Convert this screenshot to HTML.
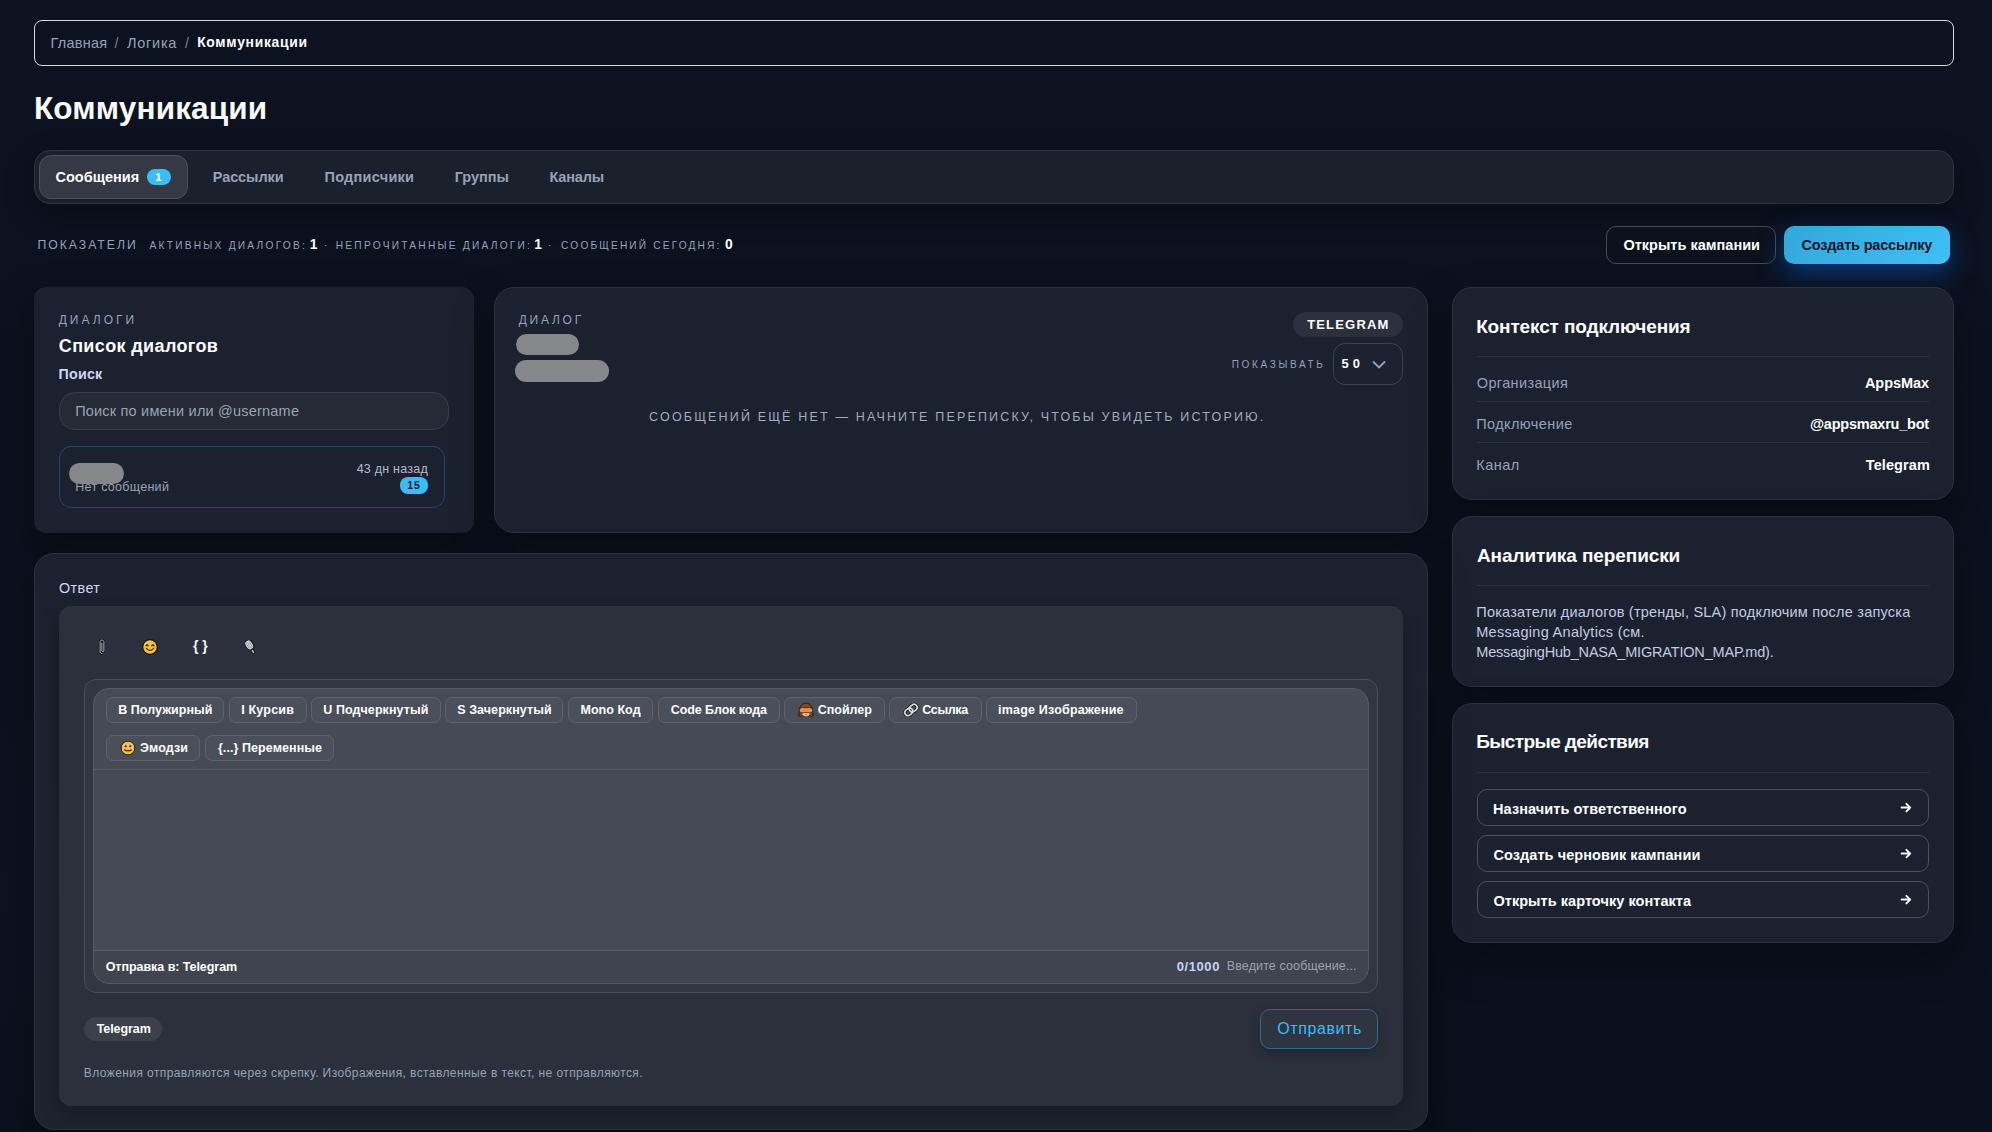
<!DOCTYPE html>
<html><head><meta charset="utf-8"><style>
html,body{margin:0;padding:0;}
body{width:1992px;height:1132px;overflow:hidden;position:relative;background:#0b111e;font-family:"Liberation Sans", sans-serif;}
.bg{position:absolute;inset:0;background:
 radial-gradient(ellipse 600px 400px at 200px 900px, rgba(30,40,70,0.15), transparent 70%),
 linear-gradient(180deg,#0c1220,#0a101d);}
</style></head><body><div class="bg"></div>
<div style="position:absolute;left:34px;top:20px;width:1920px;height:46px;box-sizing:border-box;border:1.5px solid #d6d9de;border-radius:8px;"></div>
<div style="position:absolute;left:50.44px;top:35.73px;font-size:14.5px;line-height:14.5px;font-weight:400;color:#94a3b8;letter-spacing:0.238px;white-space:nowrap;font-family:"Liberation Sans", sans-serif;">Главная</div>
<div style="position:absolute;left:114.60px;top:36.15px;font-size:14px;line-height:14px;font-weight:400;color:#7d8797;letter-spacing:0.000px;white-space:nowrap;font-family:"Liberation Sans", sans-serif;">/</div>
<div style="position:absolute;left:127.06px;top:35.73px;font-size:14.5px;line-height:14.5px;font-weight:400;color:#94a3b8;letter-spacing:0.734px;white-space:nowrap;font-family:"Liberation Sans", sans-serif;">Логика</div>
<div style="position:absolute;left:185.10px;top:36.15px;font-size:14px;line-height:14px;font-weight:400;color:#7d8797;letter-spacing:0.000px;white-space:nowrap;font-family:"Liberation Sans", sans-serif;">/</div>
<div style="position:absolute;left:197.20px;top:36.03px;font-size:13.9px;line-height:13.9px;font-weight:700;color:#ffffff;letter-spacing:0.701px;white-space:nowrap;font-family:"Liberation Sans", sans-serif;">Коммуникации</div>
<div style="position:absolute;left:33.95px;top:92.54px;font-size:31.5px;line-height:31.5px;font-weight:700;color:#f8fafc;letter-spacing:0.157px;white-space:nowrap;font-family:"Liberation Sans", sans-serif;">Коммуникации</div>
<div style="position:absolute;left:34px;top:150px;width:1920px;height:54px;box-sizing:border-box;background:#1b202d;border:1px solid #2d3341;border-radius:16px;box-shadow:0 10px 30px rgba(0,0,0,0.3);"></div>
<div style="position:absolute;left:39px;top:155px;width:149px;height:44px;box-sizing:border-box;background:#343945;border:1px solid #4a505b;border-radius:12px;"></div>
<div style="position:absolute;left:55.52px;top:169.83px;font-size:14.5px;line-height:14.5px;font-weight:700;color:#ffffff;letter-spacing:0.013px;white-space:nowrap;font-family:"Liberation Sans", sans-serif;">Сообщения</div>
<div style="position:absolute;left:147px;top:169px;width:24px;height:16px;background:#38bdf8;border-radius:8px;"></div>
<div style="position:absolute;left:155.34px;top:171.69px;font-size:11px;line-height:11px;font-weight:700;color:#ffffff;letter-spacing:0.000px;white-space:nowrap;font-family:"Liberation Sans", sans-serif;">1</div>
<div style="position:absolute;left:212.76px;top:169.83px;font-size:14.5px;line-height:14.5px;font-weight:700;color:#94a3b8;letter-spacing:-0.079px;white-space:nowrap;font-family:"Liberation Sans", sans-serif;">Рассылки</div>
<div style="position:absolute;left:324.46px;top:169.83px;font-size:14.5px;line-height:14.5px;font-weight:700;color:#94a3b8;letter-spacing:0.268px;white-space:nowrap;font-family:"Liberation Sans", sans-serif;">Подписчики</div>
<div style="position:absolute;left:454.76px;top:169.83px;font-size:14.5px;line-height:14.5px;font-weight:700;color:#94a3b8;letter-spacing:-0.049px;white-space:nowrap;font-family:"Liberation Sans", sans-serif;">Группы</div>
<div style="position:absolute;left:549.46px;top:169.83px;font-size:14.5px;line-height:14.5px;font-weight:700;color:#94a3b8;letter-spacing:-0.175px;white-space:nowrap;font-family:"Liberation Sans", sans-serif;">Каналы</div>
<div style="position:absolute;left:37.42px;top:238.97px;font-size:12.2px;line-height:12.2px;font-weight:400;color:#94a3b8;letter-spacing:2.015px;white-space:nowrap;font-family:"Liberation Sans", sans-serif;">ПОКАЗАТЕЛИ</div>
<div style="position:absolute;left:149.50px;top:241.37px;font-size:10.2px;line-height:10.2px;font-weight:400;color:#94a3b8;letter-spacing:2.233px;white-space:nowrap;font-family:"Liberation Sans", sans-serif;">АКТИВНЫХ ДИАЛОГОВ:</div>
<div style="position:absolute;left:309.87px;top:238.32px;font-size:13.8px;line-height:13.8px;font-weight:700;color:#ffffff;letter-spacing:0.000px;white-space:nowrap;font-family:"Liberation Sans", sans-serif;">1</div>
<div style="position:absolute;left:323.68px;top:239.99px;font-size:11px;line-height:11px;font-weight:400;color:#94a3b8;letter-spacing:0.000px;white-space:nowrap;font-family:"Liberation Sans", sans-serif;">·</div>
<div style="position:absolute;left:335.78px;top:241.37px;font-size:10.2px;line-height:10.2px;font-weight:400;color:#94a3b8;letter-spacing:2.226px;white-space:nowrap;font-family:"Liberation Sans", sans-serif;">НЕПРОЧИТАННЫЕ ДИАЛОГИ:</div>
<div style="position:absolute;left:534.17px;top:238.32px;font-size:13.8px;line-height:13.8px;font-weight:700;color:#ffffff;letter-spacing:0.000px;white-space:nowrap;font-family:"Liberation Sans", sans-serif;">1</div>
<div style="position:absolute;left:547.68px;top:239.99px;font-size:11px;line-height:11px;font-weight:400;color:#94a3b8;letter-spacing:0.000px;white-space:nowrap;font-family:"Liberation Sans", sans-serif;">·</div>
<div style="position:absolute;left:561.09px;top:241.37px;font-size:10.2px;line-height:10.2px;font-weight:400;color:#94a3b8;letter-spacing:2.131px;white-space:nowrap;font-family:"Liberation Sans", sans-serif;">СООБЩЕНИЙ СЕГОДНЯ:</div>
<div style="position:absolute;left:724.95px;top:238.32px;font-size:13.8px;line-height:13.8px;font-weight:700;color:#ffffff;letter-spacing:0.000px;white-space:nowrap;font-family:"Liberation Sans", sans-serif;">0</div>
<div style="position:absolute;left:1606px;top:226px;width:170px;height:38px;box-sizing:border-box;border:1px solid #444b57;border-radius:10px;background:#0c111d;"></div>
<div style="position:absolute;left:1623.42px;top:238.03px;font-size:14.5px;line-height:14.5px;font-weight:700;color:#ffffff;letter-spacing:0.015px;white-space:nowrap;font-family:"Liberation Sans", sans-serif;">Открыть кампании</div>
<div style="position:absolute;left:1784px;top:226px;width:166px;height:38px;border-radius:10px;background:linear-gradient(135deg,#34a6da,#3ec0f6);box-shadow:0 10px 26px rgba(8,95,215,0.5);"></div>
<div style="position:absolute;left:1801.42px;top:238.03px;font-size:14.5px;line-height:14.5px;font-weight:700;color:#0f172a;letter-spacing:-0.178px;white-space:nowrap;font-family:"Liberation Sans", sans-serif;">Создать рассылку</div>
<div style="position:absolute;left:34px;top:287px;width:440px;height:246px;background:#1c2130;border-radius:12px;box-shadow:0 18px 40px rgba(0,0,0,0.35);"></div>
<div style="position:absolute;left:58.74px;top:313.64px;font-size:12px;line-height:12px;font-weight:400;color:#94a3b8;letter-spacing:3.003px;white-space:nowrap;font-family:"Liberation Sans", sans-serif;">ДИАЛОГИ</div>
<div style="position:absolute;left:58.78px;top:336.76px;font-size:18px;line-height:18px;font-weight:700;color:#ffffff;letter-spacing:0.368px;white-space:nowrap;font-family:"Liberation Sans", sans-serif;">Список диалогов</div>
<div style="position:absolute;left:58.57px;top:367.00px;font-size:14.3px;line-height:14.3px;font-weight:700;color:#cdd5f2;letter-spacing:0.182px;white-space:nowrap;font-family:"Liberation Sans", sans-serif;">Поиск</div>
<div style="position:absolute;left:59px;top:392px;width:390px;height:38px;box-sizing:border-box;background:#252a36;border:1px solid #383e4a;border-radius:16px;"></div>
<div style="position:absolute;left:75.14px;top:404.03px;font-size:14.5px;line-height:14.5px;font-weight:400;color:#9aa3b2;letter-spacing:0.204px;white-space:nowrap;font-family:"Liberation Sans", sans-serif;">Поиск по имени или @username</div>
<div style="position:absolute;left:59px;top:446px;width:386px;height:61.5px;box-sizing:border-box;border:1px solid #1f4a66;border-radius:12px;background:#1c2130;"></div>
<div style="position:absolute;left:75.30px;top:481.42px;font-size:12.5px;line-height:12.5px;font-weight:400;color:#9aa3b2;letter-spacing:0.282px;white-space:nowrap;font-family:"Liberation Sans", sans-serif;">Нет сообщений</div>
<div style="position:absolute;left:69px;top:462.6px;width:55px;height:21px;background:#86878b;border-radius:11px;"></div>
<div style="position:absolute;left:356.65px;top:463.42px;font-size:12.5px;line-height:12.5px;font-weight:400;color:#b3bcc9;letter-spacing:0.235px;white-space:nowrap;font-family:"Liberation Sans", sans-serif;">43 дн назад</div>
<div style="position:absolute;left:400px;top:477.4px;width:28px;height:16.4px;background:#38bdf8;border-radius:8px;"></div>
<div style="position:absolute;left:407.37px;top:480.11px;font-size:10.5px;line-height:10.5px;font-weight:700;color:#0f172a;letter-spacing:0.738px;white-space:nowrap;font-family:"Liberation Sans", sans-serif;">15</div>
<div style="position:absolute;left:494px;top:287px;width:934px;height:246px;box-sizing:border-box;background:#1c2130;border:1px solid #2c3240;border-radius:20px;box-shadow:0 18px 40px rgba(0,0,0,0.35);"></div>
<div style="position:absolute;left:518.74px;top:313.94px;font-size:12px;line-height:12px;font-weight:400;color:#94a3b8;letter-spacing:2.744px;white-space:nowrap;font-family:"Liberation Sans", sans-serif;">ДИАЛОГ</div>
<div style="position:absolute;left:515.5px;top:334px;width:63px;height:21px;background:#86878b;border-radius:11px;"></div>
<div style="position:absolute;left:515px;top:360.2px;width:94px;height:21.5px;background:#86878b;border-radius:11px;"></div>
<div style="position:absolute;left:1293px;top:312px;width:110px;height:25px;background:#2b303c;border-radius:13px;"></div>
<div style="position:absolute;left:1307.17px;top:318.00px;font-size:13px;line-height:13px;font-weight:700;color:#ffffff;letter-spacing:1.178px;white-space:nowrap;font-family:"Liberation Sans", sans-serif;">TELEGRAM</div>
<div style="position:absolute;left:1231.70px;top:359.84px;font-size:10px;line-height:10px;font-weight:400;color:#94a3b8;letter-spacing:2.672px;white-space:nowrap;font-family:"Liberation Sans", sans-serif;">ПОКАЗЫВАТЬ</div>
<div style="position:absolute;left:1333px;top:343px;width:70px;height:42px;box-sizing:border-box;border:1px solid #3c4250;border-radius:12px;"></div>
<div style="position:absolute;left:1341.61px;top:357.00px;font-size:13px;line-height:13px;font-weight:700;color:#ffffff;letter-spacing:3.980px;white-space:nowrap;font-family:"Liberation Sans", sans-serif;">50</div>
<svg style="position:absolute;left:1371px;top:359px" width="16" height="12" viewBox="0 0 16 12"><path d="M2.5 3 L8 8.5 L13.5 3" fill="none" stroke="#94a3b8" stroke-width="1.8" stroke-linecap="round"/></svg>
<div style="position:absolute;left:649.08px;top:410.62px;font-size:12.5px;line-height:12.5px;font-weight:400;color:#a3acba;letter-spacing:2.169px;white-space:nowrap;font-family:"Liberation Sans", sans-serif;">СООБЩЕНИЙ ЕЩЁ НЕТ — НАЧНИТЕ ПЕРЕПИСКУ, ЧТОБЫ УВИДЕТЬ ИСТОРИЮ.</div>
<div style="position:absolute;left:1452px;top:287px;width:502px;height:213px;box-sizing:border-box;background:#1c2130;border:1px solid #2c3240;border-radius:20px;box-shadow:0 18px 40px rgba(0,0,0,0.35);"></div>
<div style="position:absolute;left:1476.17px;top:316.52px;font-size:19px;line-height:19px;font-weight:700;color:#ffffff;letter-spacing:-0.132px;white-space:nowrap;font-family:"Liberation Sans", sans-serif;">Контекст подключения</div>
<div style="position:absolute;left:1477px;top:356px;width:452px;height:1px;background:#2a303c;"></div>
<div style="position:absolute;left:1476.75px;top:376.33px;font-size:14.5px;line-height:14.5px;font-weight:400;color:#94a3b8;letter-spacing:0.366px;white-space:nowrap;font-family:"Liberation Sans", sans-serif;">Организация</div>
<div style="position:absolute;left:1864.94px;top:376.33px;font-size:14.5px;line-height:14.5px;font-weight:700;color:#ffffff;letter-spacing:-0.053px;white-space:nowrap;font-family:"Liberation Sans", sans-serif;">AppsMax</div>
<div style="position:absolute;left:1477px;top:401px;width:452px;height:1px;background:#2a303c;"></div>
<div style="position:absolute;left:1476.24px;top:417.03px;font-size:14.5px;line-height:14.5px;font-weight:400;color:#94a3b8;letter-spacing:0.408px;white-space:nowrap;font-family:"Liberation Sans", sans-serif;">Подключение</div>
<div style="position:absolute;left:1809.90px;top:417.03px;font-size:14.5px;line-height:14.5px;font-weight:700;color:#ffffff;letter-spacing:-0.219px;white-space:nowrap;font-family:"Liberation Sans", sans-serif;">@appsmaxru_bot</div>
<div style="position:absolute;left:1477px;top:442px;width:452px;height:1px;background:#2a303c;"></div>
<div style="position:absolute;left:1476.24px;top:457.73px;font-size:14.5px;line-height:14.5px;font-weight:400;color:#94a3b8;letter-spacing:0.460px;white-space:nowrap;font-family:"Liberation Sans", sans-serif;">Канал</div>
<div style="position:absolute;left:1865.76px;top:457.73px;font-size:14.5px;line-height:14.5px;font-weight:700;color:#ffffff;letter-spacing:0.097px;white-space:nowrap;font-family:"Liberation Sans", sans-serif;">Telegram</div>
<div style="position:absolute;left:1452px;top:516px;width:502px;height:171px;box-sizing:border-box;background:#1c2130;border:1px solid #2c3240;border-radius:20px;box-shadow:0 18px 40px rgba(0,0,0,0.35);"></div>
<div style="position:absolute;left:1476.93px;top:545.72px;font-size:19px;line-height:19px;font-weight:700;color:#ffffff;letter-spacing:-0.089px;white-space:nowrap;font-family:"Liberation Sans", sans-serif;">Аналитика переписки</div>
<div style="position:absolute;left:1477px;top:585px;width:452px;height:1px;background:#2a303c;"></div>
<div style="position:absolute;left:1476.24px;top:604.73px;font-size:14.5px;line-height:14.5px;font-weight:400;color:#c3cbe0;letter-spacing:0.223px;white-space:nowrap;font-family:"Liberation Sans", sans-serif;">Показатели диалогов (тренды, SLA) подключим после запуска</div>
<div style="position:absolute;left:1476.24px;top:624.73px;font-size:14.5px;line-height:14.5px;font-weight:400;color:#c3cbe0;letter-spacing:0.300px;white-space:nowrap;font-family:"Liberation Sans", sans-serif;">Messaging Analytics (см.</div>
<div style="position:absolute;left:1476.24px;top:644.73px;font-size:14.5px;line-height:14.5px;font-weight:400;color:#c3cbe0;letter-spacing:-0.186px;white-space:nowrap;font-family:"Liberation Sans", sans-serif;">MessagingHub_NASA_MIGRATION_MAP.md).</div>
<div style="position:absolute;left:1452px;top:703px;width:502px;height:240px;box-sizing:border-box;background:#1c2130;border:1px solid #2c3240;border-radius:20px;box-shadow:0 18px 40px rgba(0,0,0,0.35);"></div>
<div style="position:absolute;left:1476.17px;top:731.92px;font-size:19px;line-height:19px;font-weight:700;color:#ffffff;letter-spacing:-0.590px;white-space:nowrap;font-family:"Liberation Sans", sans-serif;">Быстрые действия</div>
<div style="position:absolute;left:1477px;top:772px;width:452px;height:1px;background:#2a303c;"></div>
<div style="position:absolute;left:1477.4px;top:789.4px;width:451.6px;height:37px;box-sizing:border-box;border:1px solid #4a505c;border-radius:10px;"></div>
<div style="position:absolute;left:1493.06px;top:801.53px;font-size:14.5px;line-height:14.5px;font-weight:700;color:#ffffff;letter-spacing:0.070px;white-space:nowrap;font-family:"Liberation Sans", sans-serif;">Назначить ответственного</div>
<svg style="position:absolute;left:1898px;top:801.4px" width="16" height="14" viewBox="0 0 16 14"><path d="M3.6 6.6 H12.2 M8.4 2.9 L12.2 6.6 L8.4 10.4" fill="none" stroke="#f5f6f8" stroke-width="2" stroke-linecap="round" stroke-linejoin="round"/></svg>
<div style="position:absolute;left:1477.4px;top:835.4px;width:451.6px;height:37px;box-sizing:border-box;border:1px solid #4a505c;border-radius:10px;"></div>
<div style="position:absolute;left:1493.42px;top:847.53px;font-size:14.5px;line-height:14.5px;font-weight:700;color:#ffffff;letter-spacing:0.072px;white-space:nowrap;font-family:"Liberation Sans", sans-serif;">Создать черновик кампании</div>
<svg style="position:absolute;left:1898px;top:847.4px" width="16" height="14" viewBox="0 0 16 14"><path d="M3.6 6.6 H12.2 M8.4 2.9 L12.2 6.6 L8.4 10.4" fill="none" stroke="#f5f6f8" stroke-width="2" stroke-linecap="round" stroke-linejoin="round"/></svg>
<div style="position:absolute;left:1477.4px;top:881.4px;width:451.6px;height:37px;box-sizing:border-box;border:1px solid #4a505c;border-radius:10px;"></div>
<div style="position:absolute;left:1493.42px;top:893.53px;font-size:14.5px;line-height:14.5px;font-weight:700;color:#ffffff;letter-spacing:0.054px;white-space:nowrap;font-family:"Liberation Sans", sans-serif;">Открыть карточку контакта</div>
<svg style="position:absolute;left:1898px;top:893.4px" width="16" height="14" viewBox="0 0 16 14"><path d="M3.6 6.6 H12.2 M8.4 2.9 L12.2 6.6 L8.4 10.4" fill="none" stroke="#f5f6f8" stroke-width="2" stroke-linecap="round" stroke-linejoin="round"/></svg>
<div style="position:absolute;left:34px;top:553px;width:1394px;height:577px;box-sizing:border-box;background:linear-gradient(180deg,#1c2130,#1e2330);border:1px solid #2c3240;border-radius:20px;box-shadow:0 18px 40px rgba(0,0,0,0.35);"></div>
<div style="position:absolute;left:59.06px;top:581.10px;font-size:14.3px;line-height:14.3px;font-weight:400;color:#cfd7f4;letter-spacing:0.437px;white-space:nowrap;font-family:"Liberation Sans", sans-serif;-webkit-text-stroke:0.25px #cfd7f4;">Ответ</div>
<div style="position:absolute;left:59px;top:606px;width:1344px;height:500px;background:#2b303c;border-radius:12px;box-shadow:0 8px 18px rgba(0,0,0,0.28);"></div>
<div style="position:absolute;left:192.97px;top:639.35px;font-size:14px;line-height:14px;font-weight:700;color:#f1f3f5;letter-spacing:0.000px;white-space:nowrap;font-family:"Liberation Mono", monospace;">{</div>
<div style="position:absolute;left:202.34px;top:639.35px;font-size:14px;line-height:14px;font-weight:700;color:#f1f3f5;letter-spacing:0.000px;white-space:nowrap;font-family:"Liberation Mono", monospace;">}</div>
<svg style="position:absolute;left:97.5px;top:638px" width="9" height="18" viewBox="0 0 9 18"><path d="M4 15.6 C2.8 15.6 2.1 14.8 2.1 13.6 V4.2 C2.1 2.9 2.9 2.1 4 2.1 C5.1 2.1 5.9 2.9 5.9 4.2 V12.6 C5.9 13.3 5.5 13.7 4.9 13.7 C4.3 13.7 3.9 13.3 3.9 12.6 V5.2" fill="none" stroke="#101216" stroke-width="2.3" stroke-linecap="round"/><path d="M4 15.6 C2.8 15.6 2.1 14.8 2.1 13.6 V4.2 C2.1 2.9 2.9 2.1 4 2.1 C5.1 2.1 5.9 2.9 5.9 4.2 V12.6 C5.9 13.3 5.5 13.7 4.9 13.7 C4.3 13.7 3.9 13.3 3.9 12.6 V5.2" fill="none" stroke="#b4b8be" stroke-width="1" stroke-linecap="round"/></svg>
<svg style="position:absolute;left:141.8px;top:638.6px" width="16" height="16" viewBox="0 0 16 16"><circle cx="8" cy="8" r="7.3" fill="#f9c33c" stroke="#15161a" stroke-width="1.2"/><ellipse cx="4" cy="9.3" rx="1.6" ry="1.1" fill="#f08a6e" opacity="0.8"/><ellipse cx="12" cy="9.3" rx="1.6" ry="1.1" fill="#f08a6e" opacity="0.8"/><path d="M3.9 6.9 Q5.1 4.9 6.3 6.9 M9.7 6.9 Q10.9 4.9 12.1 6.9" fill="none" stroke="#2a1d08" stroke-width="1.1" stroke-linecap="round"/><path d="M4.6 9.6 Q8 13.2 11.4 9.6" fill="none" stroke="#3a2a10" stroke-width="1.1" stroke-linecap="round"/></svg>
<svg style="position:absolute;left:243px;top:637.5px" width="15" height="19" viewBox="0 0 15 19"><g transform="rotate(-30 7.5 9)"><rect x="3.6" y="1.4" width="7.6" height="10.4" rx="3.8" fill="#d3d6db" stroke="#111318" stroke-width="1.1"/><path d="M5.6 3.6 V9.8 M7.4 3 V10.6 M9.2 3.6 V9.8" stroke="#8b9098" stroke-width="0.8"/><rect x="6.2" y="11.8" width="2.4" height="4.6" rx="1.1" fill="#c2c6cc" stroke="#111318" stroke-width="0.9"/></g></svg>
<div style="position:absolute;left:84px;top:679px;width:1294px;height:314px;box-sizing:border-box;background:#313641;border:1px solid #4a505b;border-radius:12px;"></div>
<div style="position:absolute;left:93px;top:688px;width:1276px;height:296px;box-sizing:border-box;background:#454a55;border:1px solid #555a64;border-radius:16px;overflow:hidden;"></div>
<div style="position:absolute;left:94px;top:769px;width:1274px;height:1px;background:#565b66;"></div>
<div style="position:absolute;left:94px;top:950px;width:1274px;height:1px;background:#565b66;"></div>
<div style="position:absolute;left:94px;top:951px;width:1274px;height:32px;background:#3f444f;border-radius:0 0 15px 15px;"></div>
<div style="position:absolute;left:105.70px;top:960.92px;font-size:12.5px;line-height:12.5px;font-weight:700;color:#ffffff;letter-spacing:-0.045px;white-space:nowrap;font-family:"Liberation Sans", sans-serif;">Отправка в: Telegram</div>
<div style="position:absolute;left:1176.78px;top:960.00px;font-size:13px;line-height:13px;font-weight:700;color:#c7d2fe;letter-spacing:0.572px;white-space:nowrap;font-family:"Liberation Sans", sans-serif;">0/1000</div>
<div style="position:absolute;left:1226.80px;top:960.42px;font-size:12.5px;line-height:12.5px;font-weight:400;color:#9ca3af;letter-spacing:0.114px;white-space:nowrap;font-family:"Liberation Sans", sans-serif;">Введите сообщение...</div>
<div style="position:absolute;left:106.2px;top:697px;width:118.3px;height:25.5px;box-sizing:border-box;background:#4a4f5a;border:1px solid #5d626c;border-radius:7px;"></div>
<div style="position:absolute;left:118.29px;top:704.12px;font-size:12.5px;line-height:12.5px;font-weight:700;color:#ffffff;letter-spacing:0.034px;white-space:nowrap;font-family:"Liberation Sans", sans-serif;">B Полужирный</div>
<div style="position:absolute;left:229.3px;top:697px;width:77.30000000000001px;height:25.5px;box-sizing:border-box;background:#4a4f5a;border:1px solid #5d626c;border-radius:7px;"></div>
<div style="position:absolute;left:241.19px;top:704.12px;font-size:12.5px;line-height:12.5px;font-weight:700;color:#ffffff;letter-spacing:0.200px;white-space:nowrap;font-family:"Liberation Sans", sans-serif;">I Курсив</div>
<div style="position:absolute;left:311.4px;top:697px;width:129.3px;height:25.5px;box-sizing:border-box;background:#4a4f5a;border:1px solid #5d626c;border-radius:7px;"></div>
<div style="position:absolute;left:323.25px;top:704.12px;font-size:12.5px;line-height:12.5px;font-weight:700;color:#ffffff;letter-spacing:0.077px;white-space:nowrap;font-family:"Liberation Sans", sans-serif;">U Подчеркнутый</div>
<div style="position:absolute;left:445.2px;top:697px;width:118.09999999999997px;height:25.5px;box-sizing:border-box;background:#4a4f5a;border:1px solid #5d626c;border-radius:7px;"></div>
<div style="position:absolute;left:457.23px;top:704.12px;font-size:12.5px;line-height:12.5px;font-weight:700;color:#ffffff;letter-spacing:0.071px;white-space:nowrap;font-family:"Liberation Sans", sans-serif;">S Зачеркнутый</div>
<div style="position:absolute;left:568.4px;top:697px;width:84.89999999999998px;height:25.5px;box-sizing:border-box;background:#4a4f5a;border:1px solid #5d626c;border-radius:7px;"></div>
<div style="position:absolute;left:580.49px;top:704.12px;font-size:12.5px;line-height:12.5px;font-weight:700;color:#ffffff;letter-spacing:0.036px;white-space:nowrap;font-family:"Liberation Sans", sans-serif;">Mono Код</div>
<div style="position:absolute;left:658.3px;top:697px;width:121.5px;height:25.5px;box-sizing:border-box;background:#4a4f5a;border:1px solid #5d626c;border-radius:7px;"></div>
<div style="position:absolute;left:670.80px;top:704.12px;font-size:12.5px;line-height:12.5px;font-weight:700;color:#ffffff;letter-spacing:-0.080px;white-space:nowrap;font-family:"Liberation Sans", sans-serif;">Code Блок кода</div>
<div style="position:absolute;left:784.3px;top:697px;width:100.40000000000009px;height:25.5px;box-sizing:border-box;background:#4a4f5a;border:1px solid #5d626c;border-radius:7px;"></div>
<div style="position:absolute;left:817.70px;top:704.12px;font-size:12.5px;line-height:12.5px;font-weight:700;color:#ffffff;letter-spacing:-0.008px;white-space:nowrap;font-family:"Liberation Sans", sans-serif;">Спойлер</div>
<div style="position:absolute;left:889.2px;top:697px;width:92.59999999999991px;height:25.5px;box-sizing:border-box;background:#4a4f5a;border:1px solid #5d626c;border-radius:7px;"></div>
<div style="position:absolute;left:922.30px;top:704.12px;font-size:12.5px;line-height:12.5px;font-weight:700;color:#ffffff;letter-spacing:-0.350px;white-space:nowrap;font-family:"Liberation Sans", sans-serif;">Ссылка</div>
<div style="position:absolute;left:986.3px;top:697px;width:150.70000000000005px;height:25.5px;box-sizing:border-box;background:#4a4f5a;border:1px solid #5d626c;border-radius:7px;"></div>
<div style="position:absolute;left:998.02px;top:704.12px;font-size:12.5px;line-height:12.5px;font-weight:700;color:#ffffff;letter-spacing:0.204px;white-space:nowrap;font-family:"Liberation Sans", sans-serif;">image Изображение</div>
<svg style="position:absolute;left:798px;top:702px" width="16" height="16" viewBox="0 0 16 16"><path d="M1.2 9.5 C1.2 4.5 4.2 1.2 8 1.2 C11.8 1.2 14.8 4.5 14.8 9.5 L15.2 13.2 C15 14.6 13.6 14.9 12.6 14.2 L11.5 13.6 Q8 15.6 4.5 13.6 L3.4 14.2 C2.4 14.9 1 14.6 0.8 13.2 Z" fill="#7b4a2b" stroke="#1b1410" stroke-width="0.9"/><ellipse cx="8" cy="11.8" rx="3.6" ry="2.6" fill="#f3b58c"/><path d="M6.6 12.3 Q8 13.6 9.4 12.3 Z" fill="#c0392b"/><path d="M1.2 8.6 Q1.6 5.4 4.2 5.4 Q8 6.2 11.8 5.4 Q14.4 5.4 14.8 8.6 Q14.6 10.6 12.6 10.8 Q8 10 3.4 10.8 Q1.4 10.6 1.2 8.6 Z" fill="#ef8a4a" stroke="#1b1410" stroke-width="0.6"/></svg>
<svg style="position:absolute;left:902.5px;top:702px" width="16" height="16" viewBox="0 0 16 16"><g transform="rotate(-40 8 8)"><rect x="0.9" y="4.9" width="8.4" height="6.2" rx="3.1" fill="none" stroke="#16181c" stroke-width="3.2"/><rect x="6.7" y="4.9" width="8.4" height="6.2" rx="3.1" fill="none" stroke="#16181c" stroke-width="3.2"/><rect x="0.9" y="4.9" width="8.4" height="6.2" rx="3.1" fill="none" stroke="#d9dadc" stroke-width="1.7"/><rect x="6.7" y="4.9" width="8.4" height="6.2" rx="3.1" fill="none" stroke="#d9dadc" stroke-width="1.7"/></g></svg>
<div style="position:absolute;left:106.2px;top:735px;width:94.2px;height:25.5px;box-sizing:border-box;background:#4a4f5a;border:1px solid #5d626c;border-radius:7px;"></div>
<div style="position:absolute;left:139.89px;top:741.82px;font-size:12.5px;line-height:12.5px;font-weight:700;color:#ffffff;letter-spacing:0.150px;white-space:nowrap;font-family:"Liberation Sans", sans-serif;">Эмодзи</div>
<div style="position:absolute;left:205.4px;top:735px;width:128.79999999999998px;height:25.5px;box-sizing:border-box;background:#4a4f5a;border:1px solid #5d626c;border-radius:7px;"></div>
<div style="position:absolute;left:217.91px;top:741.82px;font-size:12.5px;line-height:12.5px;font-weight:700;color:#ffffff;letter-spacing:0.077px;white-space:nowrap;font-family:"Liberation Sans", sans-serif;">{...} Переменные</div>
<svg style="position:absolute;left:119.7px;top:740px" width="16" height="16" viewBox="0 0 16 16"><circle cx="8" cy="8" r="6.9" fill="#f6c23c" stroke="#15161a" stroke-width="1"/><circle cx="5.7" cy="6.3" r="1" fill="#1d1508"/><circle cx="10.3" cy="6.3" r="1" fill="#1d1508"/><path d="M4.6 9.9 Q8 11.5 11.4 9.9" fill="none" stroke="#1d1508" stroke-width="1.1" stroke-linecap="round"/></svg>
<div style="position:absolute;left:84.3px;top:1017px;width:77.5px;height:24px;background:#3b404b;border-radius:12px;"></div>
<div style="position:absolute;left:96.67px;top:1022.72px;font-size:12.5px;line-height:12.5px;font-weight:700;color:#ffffff;letter-spacing:-0.073px;white-space:nowrap;font-family:"Liberation Sans", sans-serif;">Telegram</div>
<div style="position:absolute;left:1260px;top:1009px;width:118px;height:40px;box-sizing:border-box;background:#2e3440;border:1px solid #2f6b8c;border-radius:10px;box-shadow:0 4px 12px rgba(0,0,0,0.25);"></div>
<div style="position:absolute;left:1277.28px;top:1021.26px;font-size:16px;line-height:16px;font-weight:400;color:#38bdf8;letter-spacing:0.588px;white-space:nowrap;font-family:"Liberation Sans", sans-serif;">Отправить</div>
<div style="position:absolute;left:83.84px;top:1066.84px;font-size:12px;line-height:12px;font-weight:400;color:#94a3b8;letter-spacing:0.410px;white-space:nowrap;font-family:"Liberation Sans", sans-serif;">Вложения отправляются через скрепку. Изображения, вставленные в текст, не отправляются.</div>
</body></html>
